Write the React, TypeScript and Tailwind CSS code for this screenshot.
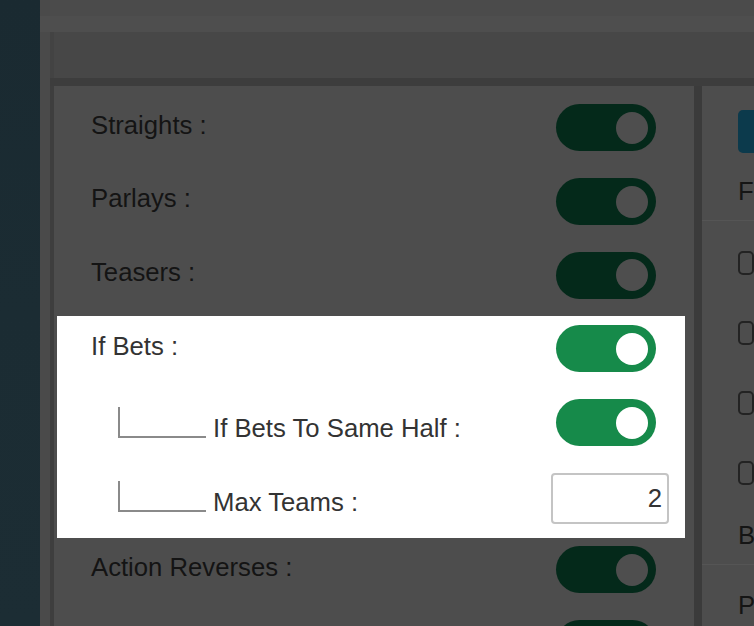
import { ReactNode } from "react";

type RowProps = { lit?: boolean; children: ReactNode; right: ReactNode; className?: string };

function Toggle({ lit }: { lit?: boolean }) {
  return (
    <div
      className={`w-[100px] h-[47px] rounded-full flex items-center justify-end pr-[8px] ${
        lit ? "bg-[#168a4a]" : "bg-[#04291a]"
      }`}
    >
      <div className={`w-[32px] h-[32px] rounded-full ${lit ? "bg-white" : "bg-[#4e4e4e]"}`} />
    </div>
  );
}

function Label({ lit, children }: { lit?: boolean; children: ReactNode }) {
  return (
    <span className={`text-[25.7px] mb-[6px] whitespace-nowrap ${lit ? "text-[#333333]" : "text-[#141414]"}`}>
      {children}
    </span>
  );
}

function Row({ lit, children, right, className = "" }: RowProps) {
  return (
    <div className={`relative h-[73.7px] flex items-center justify-between pl-[37px] pr-[38px] ${className}`}>
      <Label lit={lit}>{children}</Label>
      {right}
    </div>
  );
}

function SubRow({ label, right, pr }: { label: string; right: ReactNode; pr: string }) {
  return (
    <div className={`relative h-[73.7px] flex items-center justify-between pl-[64px] ${pr}`}>
      <div className="flex items-end">
        <div className="w-[88px] h-[31px] border-l-2 border-b-2 border-[#8a8a8a]" />
        <span className="ml-[7px] -mb-[4px] text-[25.7px] leading-none text-[#333333] whitespace-nowrap">
          {label}
        </span>
      </div>
      {right}
    </div>
  );
}

function Check() {
  return <div className="w-[24px] h-[24px] rounded-[5px] border-2 border-[#232323]" />;
}

export default function App() {
  return (
    <div className="w-[754px] h-[626px] overflow-hidden flex font-['Liberation_Sans',Arial,sans-serif] bg-[#4a4a4a]">
      {/* left background strip */}
      <div className="w-[40px] shrink-0 bg-gradient-to-b from-[#1a2a31] via-[#1b2c33] to-[#1c2d34]" />

      <div className="flex-1 flex flex-col min-w-0">
        <div className="h-[16px] ml-[10px] bg-[#4b4b4b]" />
        <div className="h-[16px] bg-[#4e4e4e]" />
        <div className="h-[46px] ml-[10px] bg-[#474747] border-l-4 border-[#434343]" />
        <div className="h-[8px] ml-[10px] bg-[#3d3d3d]" />

        <div className="flex-1 ml-[10px] flex min-h-0">
          {/* settings card */}
          <div className="w-[644px] shrink-0 border-l-4 border-[#3e3e3e] bg-[#4d4d4d] pt-[5px]">
            <Row right={<Toggle />}>Straights :</Row>
            <Row right={<Toggle />}>Parlays :</Row>
            <Row right={<Toggle />}>Teasers :</Row>

            {/* highlighted group */}
            <div className="relative">
              <div className="absolute top-[4px] -bottom-[5px] left-[3px] right-[9px] bg-white" />
              <Row lit right={<Toggle lit />}>If Bets :</Row>
              <SubRow label="If Bets To Same Half :" pr="pr-[38px]" right={<Toggle lit />} />
              <SubRow
                label="Max Teams :"
                pr="pr-[25px]"
                right={
                  <input
                    type="text"
                    value="2"
                    readOnly
                    className="w-[118px] h-[51px] mt-[4px] border-2 border-[#c4c4c4] rounded-[4px] bg-white text-right pr-[5px] text-[25.7px] text-[#333333] outline-none"
                  />
                }
              />
            </div>

            <Row right={<Toggle />}>Action Reverses :</Row>
            <Row right={<Toggle />}>{""}</Row>
          </div>

          <div className="w-[8px] shrink-0 bg-[#3b3b3b]" />

          {/* right panel */}
          <div className="flex-1 bg-[#4d4d4d] text-[25.7px] text-[#151515] whitespace-nowrap overflow-hidden">
            <div className="ml-[36px] mt-[24px] h-[43px] w-[120px] rounded-[5px] bg-[#0c3a4c]" />
            <div className="mt-[11px] h-[57px] pl-[36px] flex items-center border-b border-[#555555]">
              <span className="mb-[2px]">Free Play</span>
            </div>
            <div className="pt-[7px]">
              {[0, 1, 2, 3].map((i) => (
                <div key={i} className="h-[70px] pl-[36px] flex items-center">
                  <Check />
                </div>
              ))}
            </div>
            <div className="h-[57px] pl-[36px] flex items-center border-b border-[#555555]">
              <span className="mb-[2px]">Buy Points</span>
            </div>
            <div className="h-[82px] pl-[36px] flex items-center">
              <span className="mb-[2px]">Props</span>
            </div>
          </div>
        </div>
      </div>
    </div>
  );
}
